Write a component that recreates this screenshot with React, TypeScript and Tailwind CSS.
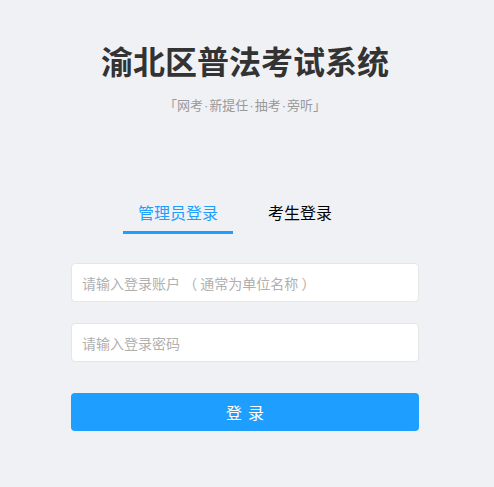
import { useState } from 'react'

const font = { fontFamily: '"Microsoft YaHei", "Noto Sans CJK SC", "Noto Sans", sans-serif' }

// narrow latin middle dot between the exam modes
function Dot() {
  return <span className="mx-[1px]" style={{ fontFamily: '"Liberation Sans", sans-serif' }}>·</span>
}

export default function App() {
  const [tab, setTab] = useState<'admin' | 'student'>('admin')

  return (
    <div className="min-h-[487px] w-full bg-[#f0f1f5]" style={font}>
      <div className="ml-[71px] w-[348px] pt-[39px]">
        <h1 className="text-center text-[32px] font-bold leading-[42px] text-[#333]">
          渝北区普法考试系统
        </h1>
        <p className="mt-[15px] text-center text-[13px] leading-[18px] text-[#999]">
          「网考<Dot />新提任<Dot />抽考<Dot />旁听」
        </p>

        <div className="mt-[86px] flex pl-[52px]">
          {[
            { key: 'admin' as const, label: '管理员登录' },
            { key: 'student' as const, label: '考生登录' },
          ].map((t) => (
            <button
              key={t.key}
              onClick={() => setTab(t.key)}
              className={`w-[110px] pb-[9px] pt-[1px] text-center text-[16px] leading-[20px] ${
                tab === t.key
                  ? 'border-b-[3px] border-[#1e9fff] text-[#1e9fff]'
                  : 'border-b-[3px] border-transparent text-black'
              } ${t.key === 'student' ? 'ml-[12px]' : ''}`}
            >
              {t.label}
            </button>
          ))}
        </div>

        <div className="mt-[29px] flex flex-col gap-[21px]">
          <input
            type="text"
            placeholder={tab === 'admin' ? '请输入登录账户 （ 通常为单位名称 ）' : '请输入登录账户'}
            className="h-[39px] w-full rounded-[4px] border border-[#e6e6e6] bg-white px-[10px] text-[14px] text-[#333] outline-none placeholder:text-[#b0b0b0]"
          />
          <input
            type="password"
            placeholder="请输入登录密码"
            className="h-[39px] w-full rounded-[4px] border border-[#e6e6e6] bg-white px-[10px] text-[14px] text-[#333] outline-none placeholder:text-[#b0b0b0]"
          />
        </div>

        <button className="mt-[31px] h-[38px] w-full rounded-[4px] bg-[#1e9fff] pl-[6px] text-[16px] tracking-[6px] text-white">
          登录
        </button>
      </div>
    </div>
  )
}
